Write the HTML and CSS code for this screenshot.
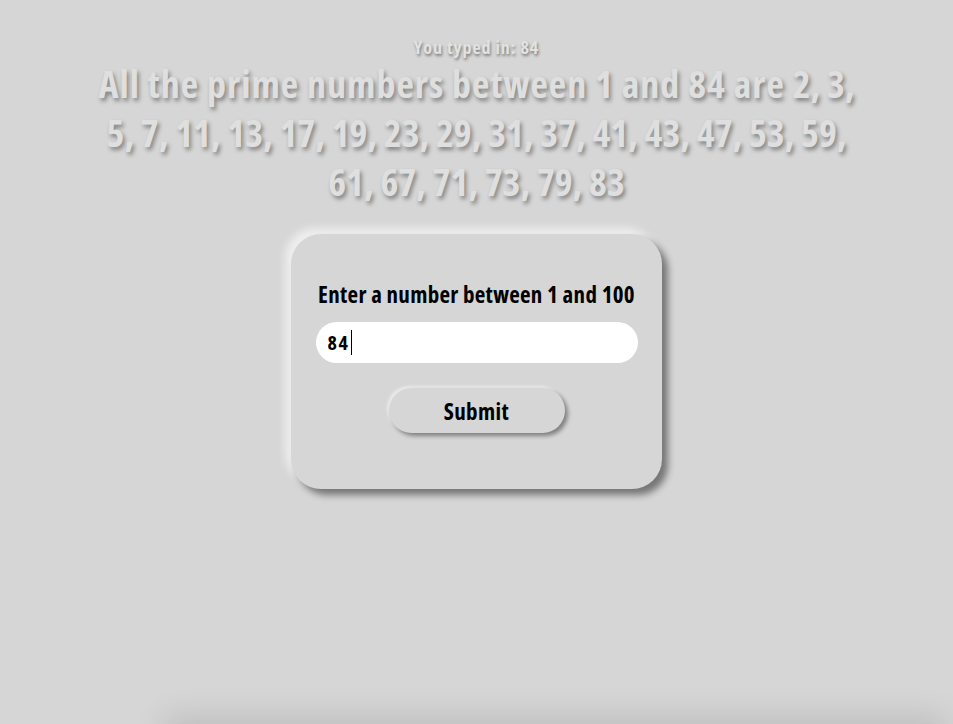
FILE: index.html
```html
<!DOCTYPE html>
<html lang="en">
<head>
<meta charset="utf-8">
<title>Prime numbers</title>
<link rel="stylesheet" href="styles.css">
</head>
<body>
<main class="page">
  <p class="typed">You typed in: 84</p>
  <h1 class="result">All the prime numbers between 1 and 84 are <span class="prime-list">2, 3, 5, 7, 11, 13, 17, 19, 23, 29, 31, 37, 41, 43, 47, 53, 59, 61, 67, 71, 73, 79, 83</span></h1>
  <form class="card">
    <label class="card-title" for="num">Enter a number between 1 and 100</label>
    <div class="input-wrap">
      <input class="num-input" id="num" type="text" value="84" autofocus>
      <span class="caret"></span>
    </div>
    <button class="submit-btn" type="button">Submit</button>
  </form>
  <div class="bottom-panel"></div>
</main>
</body>
</html>
```
FILE: styles.css
```css
html, body {
  margin: 0;
  padding: 0;
  height: 100%;
  overflow: hidden;
}
body {
  background: #d6d6d6;
  font-family: "Open Sans", "Roboto", sans-serif;
  font-stretch: 75%;
  font-weight: 700;
}
.page {
  display: flex;
  flex-direction: column;
  align-items: center;
}
.typed {
  margin: 38px 0 3px;
  font-size: 18px;
  line-height: 18px;
  letter-spacing: 0.9px;
  color: #e2e2e2;
  text-shadow: 1px 2px 3px rgba(0,0,0,0.45);
}
.result {
  width: 80%;
  margin: 0;
  text-align: center;
  font-size: 38px;
  line-height: 49px;
  letter-spacing: 1px;
  color: #dfdfdf;
  text-shadow: 2px 3px 4px rgba(0,0,0,0.4);
}
.prime-list {
  letter-spacing: 0;
}
.card {
  margin-top: 28px;
  width: 371px;
  height: 255px;
  box-sizing: border-box;
  padding: 47px 24px 0;
  border-radius: 30px;
  background: #d6d6d6;
  box-shadow: 6px 6px 7px rgba(0,0,0,0.45), -6px -6px 9px rgba(255,255,255,0.6);
  display: flex;
  flex-direction: column;
  align-items: center;
}
.card-title {
  font-size: 23px;
  line-height: 26px;
  letter-spacing: 0.3px;
  color: #000;
}
.input-wrap {
  position: relative;
  margin-top: 15px;
}
.num-input {
  display: block;
  width: 322px;
  height: 41px;
  box-sizing: border-box;
  border: none;
  outline: none;
  border-radius: 21px;
  background: #fff;
  padding: 0 12px;
  font-family: inherit;
  font-stretch: 75%;
  font-weight: 700;
  font-size: 20px;
  letter-spacing: 1.5px;
  color: #000;
  caret-color: transparent;
}
.caret {
  position: absolute;
  left: 35px;
  top: 8px;
  width: 1px;
  height: 25px;
  background: #000;
}
.submit-btn {
  margin-top: 25px;
  width: 176px;
  height: 45px;
  border: none;
  border-radius: 23px;
  background: #d6d6d6;
  box-shadow: 3px 3px 4px rgba(0,0,0,0.4), -2px -2px 3px rgba(255,255,255,0.5);
  font-family: inherit;
  font-stretch: 75%;
  font-weight: 700;
  font-size: 23px;
  letter-spacing: 0.4px;
  color: #000;
}
.bottom-panel {
  align-self: flex-start;
  margin: 236px 0 0 165px;
  width: 780px;
  height: 200px;
  background: #d6d6d6;
  box-shadow: 0 -8px 30px rgba(0,0,0,0.12);
}
```
